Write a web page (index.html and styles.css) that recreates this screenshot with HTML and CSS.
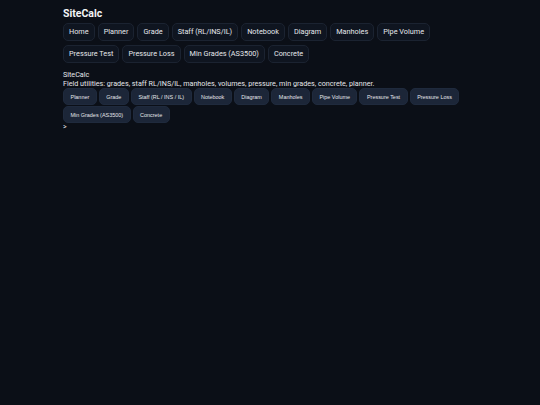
FILE: index.html
```html
<!DOCTYPE html>
<html>
<head>
<meta charset="utf-8">
<link rel="stylesheet" href="styles.css">
</head>
<body>
<div class="wrap">
  <header class="top">
    <h1 class="brand">SiteCalc</h1>
    <nav class="nav">
      <a class="nav-btn">Home</a>
      <a class="nav-btn">Planner</a>
      <a class="nav-btn">Grade</a>
      <a class="nav-btn">Staff (RL/INS/IL)</a>
      <a class="nav-btn">Notebook</a>
      <a class="nav-btn">Diagram</a>
      <a class="nav-btn">Manholes</a>
      <a class="nav-btn">Pipe Volume</a>
      <a class="nav-btn">Pressure Test</a>
      <a class="nav-btn">Pressure Loss</a>
      <a class="nav-btn">Min Grades (AS3500)</a>
      <a class="nav-btn">Concrete</a>
    </nav>
  </header>
  <main class="content">
    <div class="line">SiteCalc</div>
    <div class="line">Field utilities: grades, staff RL/INS/IL, manholes, volumes, pressure, min grades, concrete, planner.</div>
    <div class="tools">
      <button class="tool">Planner</button>
      <button class="tool">Grade</button>
      <button class="tool">Staff (RL / INS / IL)</button>
      <button class="tool">Notebook</button>
      <button class="tool">Diagram</button>
      <button class="tool">Manholes</button>
      <button class="tool">Pipe Volume</button>
      <button class="tool">Pressure Test</button>
      <button class="tool">Pressure Loss</button>
      <button class="tool">Min Grades (AS3500)</button>
      <button class="tool">Concrete</button>
    </div>
    <div class="prompt">&gt;</div>
  </main>
</div>
</body>
</html>
```
FILE: styles.css
```css
html, body {
  margin: 0;
  padding: 0;
  background: #0b0f17;
  color: #e5e7eb;
  font-family: Roboto, "Noto Sans", sans-serif;
}
.wrap {
  width: 414px;
  margin: 0 auto;
  padding-top: 7px;
}
.brand {
  margin: 0 0 3px 0;
  font-size: 10.5px;
  font-weight: 700;
  line-height: 13px;
  color: #f3f4f6;
}
.nav {
  display: flex;
  flex-wrap: wrap;
  gap: 4px 3px;
}
.nav-btn {
  display: block;
  box-sizing: border-box;
  padding: 0 5px;
  height: 18px;
  line-height: 16px;
  font-size: 7.3px;
  color: #e5e7eb;
  background: #0f1520;
  border: 1px solid #1b2331;
  border-radius: 5px;
}
.content {
  margin-top: 8px;
  font-size: 7.2px;
  line-height: 8.5px;
  color: #e5e7eb;
}
.tools {
  display: flex;
  flex-wrap: wrap;
  column-gap: 2px;
  row-gap: 1px;
}
.tool {
  box-sizing: border-box;
  font-family: "Liberation Sans", Arial, sans-serif;
  font-size: 5.45px;
  height: 17px;
  padding: 0 6.5px;
  color: #e5e7eb;
  background: #1c2638;
  border: 1px solid #1f2a3d;
  border-radius: 5px;
}
.prompt {
  font-size: 7px;
}
```
